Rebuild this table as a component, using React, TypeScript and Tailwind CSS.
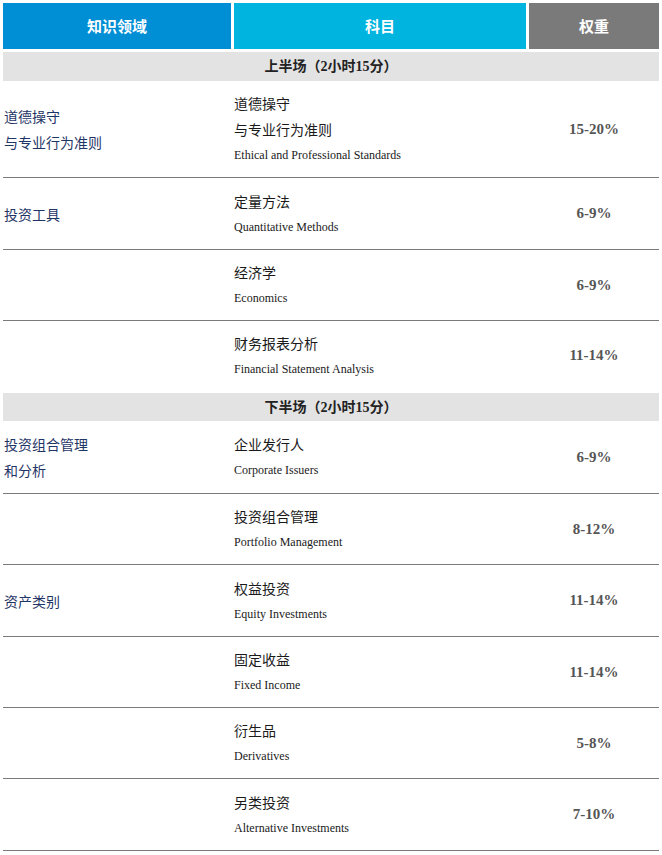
import React from "react";

type Row = {
  area?: string[];
  cn: string[];
  en: string;
  w: string;
  h: string;
  border: boolean;
};

const cjk = { fontFamily: '"Noto Sans CJK SC", "Noto Sans", sans-serif' };
const serif = { fontFamily: '"Liberation Serif", "Noto Sans CJK SC", serif' };

function Section({ title, h }: { title: string; h: string }) {
  return (
    <div
      className={`mt-[3px] flex items-center justify-center bg-[#e3e3e3] text-[14px] font-bold text-[#222] ${h}`}
      style={serif}
    >
      {title}
    </div>
  );
}

function BodyRow({ r }: { r: Row }) {
  return (
    <div
      className={`grid grid-cols-[228px_292px_130px] gap-x-[3px] ${r.h} ${
        r.border ? "border-b border-[#7a7a7a]" : ""
      }`}
    >
      <div className="flex flex-col justify-center pl-[1px] text-[14px] leading-[26px] text-[#1f3566]" style={cjk}>
        {r.area?.map((a) => (
          <div key={a}>{a}</div>
        ))}
      </div>
      <div className="flex flex-col justify-center leading-[26px]">
        {r.cn.map((c) => (
          <div key={c} className="text-[14px] text-[#1a1a1a]" style={cjk}>
            {c}
          </div>
        ))}
        <div className="text-[12px] text-[#1a1a1a]" style={serif}>
          {r.en}
        </div>
      </div>
      <div className="flex items-center justify-center text-[15px] font-bold text-[#555]" style={serif}>
        {r.w}
      </div>
    </div>
  );
}

const first: Row[] = [
  { area: ["道德操守", "与专业行为准则"], cn: ["道德操守", "与专业行为准则"], en: "Ethical and Professional Standards", w: "15-20%", h: "h-[97px]", border: true },
  { area: ["投资工具"], cn: ["定量方法"], en: "Quantitative Methods", w: "6-9%", h: "h-[72px]", border: true },
  { cn: ["经济学"], en: "Economics", w: "6-9%", h: "h-[71px]", border: true },
  { cn: ["财务报表分析"], en: "Financial Statement Analysis", w: "11-14%", h: "h-[69px]", border: false },
];

const second: Row[] = [
  { area: ["投资组合管理", "和分析"], cn: ["企业发行人"], en: "Corporate Issuers", w: "6-9%", h: "h-[73px]", border: true },
  { cn: ["投资组合管理"], en: "Portfolio Management", w: "8-12%", h: "h-[71px]", border: true },
  { area: ["资产类别"], cn: ["权益投资"], en: "Equity Investments", w: "11-14%", h: "h-[72px]", border: true },
  { cn: ["固定收益"], en: "Fixed Income", w: "11-14%", h: "h-[71px]", border: true },
  { cn: ["衍生品"], en: "Derivatives", w: "5-8%", h: "h-[71px]", border: true },
  { cn: ["另类投资"], en: "Alternative Investments", w: "7-10%", h: "h-[72px]", border: true },
];

export default function App() {
  return (
    <div className="min-h-[855px] w-[662px] bg-white">
      <div className="ml-[3px] w-[656px] pt-[3px]">
        <div className="grid h-[46px] grid-cols-[228px_292px_130px] gap-x-[3px] text-[15px] font-bold text-white" style={cjk}>
          <div className="flex items-center justify-center bg-[#008ed5]">知识领域</div>
          <div className="flex items-center justify-center bg-[#00b4e0]">科目</div>
          <div className="flex items-center justify-center bg-[#7a7a7a]">权重</div>
        </div>
        <Section title="上半场（2小时15分）" h="h-[29px]" />
        {first.map((r) => (
          <BodyRow key={r.en} r={r} />
        ))}
        <Section title="下半场（2小时15分）" h="h-[28px]" />
        {second.map((r) => (
          <BodyRow key={r.en} r={r} />
        ))}
      </div>
    </div>
  );
}
